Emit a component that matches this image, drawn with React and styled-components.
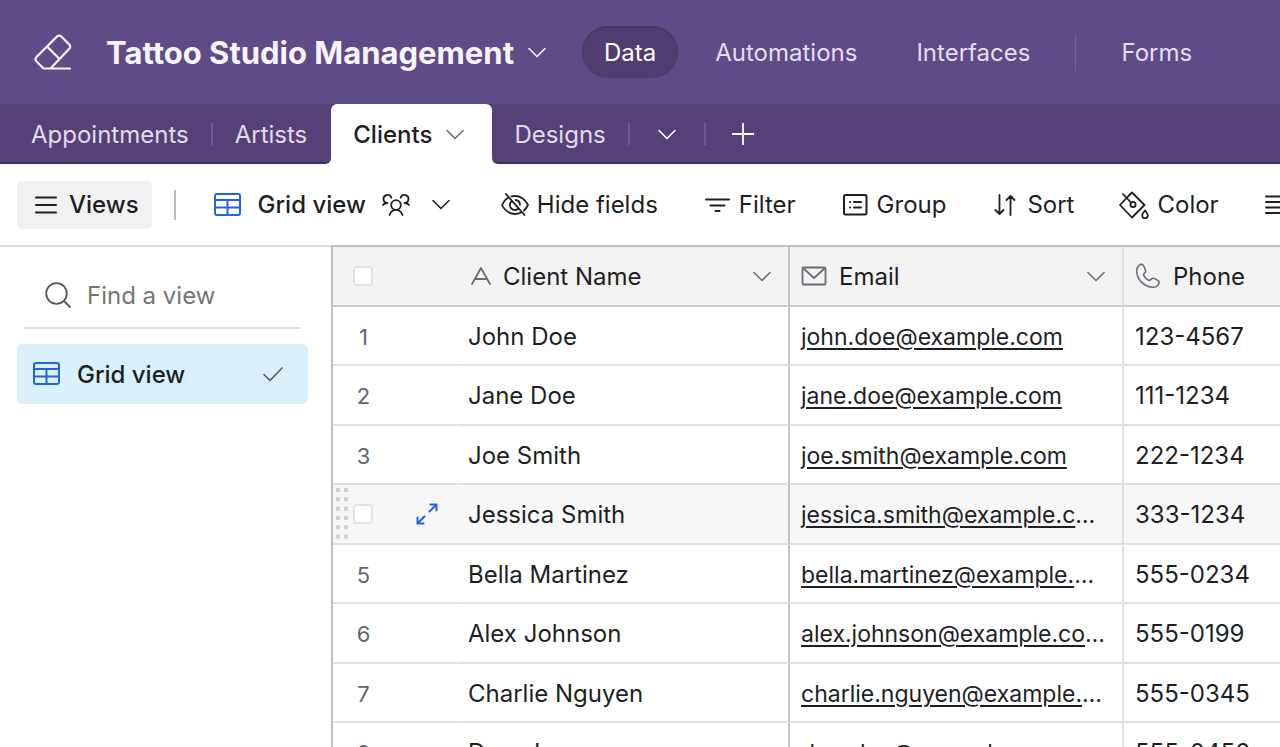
import { useState } from "react"
import styled, { createGlobalStyle } from "styled-components"

const CLIENTS = [
    { name: "John Doe", email: "john.doe@example.com", phone: "123-4567" },
    { name: "Jane Doe", email: "jane.doe@example.com", phone: "111-1234" },
    { name: "Joe Smith", email: "joe.smith@example.com", phone: "222-1234" },
    { name: "Jessica Smith", email: "jessica.smith@example.com", phone: "333-1234" },
    { name: "Bella Martinez", email: "bella.martinez@example.com", phone: "555-0234" },
    { name: "Alex Johnson", email: "alex.johnson@example.com", phone: "555-0199" },
    { name: "Charlie Nguyen", email: "charlie.nguyen@example.com", phone: "555-0345" },
    { name: "Drew Lee", email: "drew.lee@example.com", phone: "555-0456" },
]

const Icon = ({ w, h, stroke = 2, children }) => (
    <Svg width={w} height={h} viewBox={`0 0 ${w} ${h}`} strokeWidth={stroke} aria-hidden="true">
        {children}
    </Svg>
)

const Chevron = () => (
    <Icon w={18} h={11} stroke={1.6}><path d="M1 1.5l8 8 8-8" /></Icon>
)
const EraserIcon = () => (
    <Icon w={38} h={36} stroke={2.2}>
        <path d="M36 34.500H9.500L2.500 27.500a3 3 0 0 1 0-4.500L23 2.500a3 3 0 0 1 4.300 0l8 8a3 3 0 0 1 0 4.300L16.500 34.500M13.500 13L25 24.500" />
    </Icon>
)
const GridIcon = () => (
    <Icon w={28} h={24}>
        <rect x="1" y="1" width="25" height="21" rx="2" />
        <path d="M1 7h25M1 14.500h25M13.500 7v15" />
    </Icon>
)
const LinesIcon = () => (
    <Icon w={22} h={18}><path d="M1 1.500h20M1 9h20M1 16.500h20" /></Icon>
)
const PeopleIcon = () => (
    <Icon w={28} h={22} stroke={1.8}>
        <circle cx="14" cy="11" r="4.800" />
        <path d="M7.500 21c1-3 3.400-5.200 6.500-5.200s5.500 2.200 6.500 5.200M1 11c1.200-1.500 2.800-2 4.500-2M5.500 9a4 4 0 1 1 3.800-5.300M27 11c-1.200-1.500-2.800-2-4.500-2M22.500 9a4 4 0 1 0-3.800-5.300" />
    </Icon>
)
const EyeOffIcon = () => (
    <Icon w={28} h={24} stroke={1.8}>
        <path d="M5 1l18.500 21M10.500 3.400A12 12 0 0 1 14 3c9 0 13 9 13 9a17 17 0 0 1-4.200 5.600M7 4.800C2.900 7.200 1 12 1 12s4 9 13 9a12.500 12.500 0 0 0 6-1.500M17.300 15.700a5 5 0 0 1-6.800-7.400M14.500 7a5 5 0 0 1 4.500 4.600" />
    </Icon>
)
const FilterIcon = () => (
    <Icon w={28} h={16}><path d="M3 2.500h23M7.500 8.500h14M12.500 14h4" /></Icon>
)
const GroupIcon = () => (
    <Icon w={28} h={22}>
        <rect x="3" y="1" width="22.500" height="19.500" rx="1.500" />
        <path d="M9 8h.2M13 8h7M9 13.500h.2M13 13.500h7" />
    </Icon>
)
const SortIcon = () => (
    <Icon w={28} h={22} stroke={1.8}>
        <path d="M8.500 1v19M4.500 16l4 4 4-4M19.500 21V2M15.500 6l4-4 4 4" />
    </Icon>
)
const BucketIcon = () => (
    <Icon w={30} h={28} stroke={1.8}>
        <path d="M9 5.500L13 1.500 25.500 14 13 26.500 1 14 9 5.500M4 3l8 8.500" />
        <circle cx="14" cy="13.500" r="2.600" />
        <path d="M26 19.500s2.800 3.200 2.800 5a2.800 2.800 0 0 1-5.600 0c0-1.800 2.800-5 2.800-5z" />
    </Icon>
)
const RowHeightIcon = () => (
    <Icon w={28} h={20}><path d="M2 1.500h24M2 7h24M2 12.500h24M2 18h24" /></Icon>
)
const SearchIcon = () => (
    <Icon w={26} h={26} stroke={1.8}>
        <circle cx="11.500" cy="11.500" r="10.300" />
        <path d="M19 19l6 6" />
    </Icon>
)
const CheckIcon = () => (
    <Icon w={20} h={15} stroke={1.6}><path d="M1 7.500l6 6L19 1" /></Icon>
)
const TextIcon = () => (
    <Icon w={20} h={18} stroke={1.8}><path d="M1 17L10 1l9 16M4.500 12h11" /></Icon>
)
const MailIcon = () => (
    <Icon w={26} h={20} stroke={1.8}>
        <rect x="1.500" y="1.500" width="23" height="17" rx="1" />
        <path d="M2 2l11 10L24 2" />
    </Icon>
)
const PhoneIcon = () => (
    <Icon w={26} h={26} stroke={1.6}>
        <path d="M7.500 1.500C5 1 2 3 1.700 7c-.5 9 7.300 17 16.300 17.300 4 .2 6.500-3 6-5.800-.2-1-5.200-3.600-6.200-3.300l-3.300 2.300c-3-1-5-3-6-6l2.200-3C11 7.500 8.500 1.800 7.500 1.500z" />
    </Icon>
)
const ExpandIcon = () => (
    <Icon w={22} h={22}>
        <path d="M13.500 8.500L20.500 1.500M14.500 1.500h6V7.500M8.500 13.500l-7 7M1.500 14.500v6H7.500" />
    </Icon>
)
const PlusIcon = () => (
    <Icon w={22} h={22} stroke={1.8}><path d="M11 0v22M0 11h22" /></Icon>
)
const DragDots = () => (
    <Svg width="12" height="52" viewBox="0 0 12 52" aria-hidden="true">
        {[0, 1, 2, 3, 4, 5].map((i) => (
            <g key={i} fill="#d0d0d0" stroke="none">
                <rect x="0" y={i * 9.3} width="4" height="4" />
                <rect x="8" y={i * 9.3} width="4" height="4" />
            </g>
        ))}
    </Svg>
)

const App = () => {
    const [search, setSearch] = useState("")
    const [hovered, setHovered] = useState(3)

    return (
        <Page>
            <GlobalStyle />
            <Header>
                <BaseButton>
                    <EraserIcon />
                    <Title>Tattoo Studio Management</Title>
                    <Chevron />
                </BaseButton>
                <Nav>
                    <NavButton $active>Data</NavButton>
                    <NavButton>Automations</NavButton>
                    <NavButton>Interfaces</NavButton>
                    <NavDivider />
                    <NavButton>Forms</NavButton>
                </Nav>
            </Header>

            <TabStrip>
                <TabGroup $side="left">
                    <Tab>Appointments</Tab>
                    <TabDivider />
                    <Tab>Artists</Tab>
                </TabGroup>
                <ActiveCell>
                    <ActiveTab>Clients <Chevron /></ActiveTab>
                </ActiveCell>
                <TabGroup $side="right">
                    <Tab>Designs</Tab>
                    <TabDivider />
                    <IconTab aria-label="All tables"><Chevron /></IconTab>
                    <TabDivider />
                    <IconTab aria-label="Add table"><PlusIcon /></IconTab>
                </TabGroup>
            </TabStrip>

            <Toolbar>
                <ViewsButton><LinesIcon />Views</ViewsButton>
                <ToolDivider />
                <ViewButton>
                    <Blue><GridIcon /></Blue>
                    <strong>Grid view</strong>
                    <PeopleIcon />
                    <Chevron />
                </ViewButton>
                <Tools>
                    <ToolButton><EyeOffIcon />Hide fields</ToolButton>
                    <ToolButton><FilterIcon />Filter</ToolButton>
                    <ToolButton><GroupIcon />Group</ToolButton>
                    <ToolButton><SortIcon />Sort</ToolButton>
                    <ToolButton><BucketIcon />Color</ToolButton>
                    <ToolButton aria-label="Row height"><RowHeightIcon /></ToolButton>
                </Tools>
            </Toolbar>

            <Body>
                <Sidebar>
                    <SearchBox>
                        <SearchIcon />
                        <input
                            aria-label="Find a view"
                            placeholder="Find a view"
                            value={search}
                            onChange={(e) => setSearch(e.target.value)}
                        />
                    </SearchBox>
                    <ViewItem>
                        <Blue><GridIcon /></Blue>
                        <span>Grid view</span>
                        <CheckIcon />
                    </ViewItem>
                </Sidebar>
                <GridPane>
                    <Table>
                        <colgroup>
                            <col width="124" />
                            <col width="333" />
                            <col width="334" />
                            <col />
                        </colgroup>
                        <thead>
                            <tr>
                                <HeadCell><Gutter><Checkbox aria-label="Select all" /></Gutter></HeadCell>
                                <HeadCell $primary>
                                    <Field><TextIcon /><span>Client Name</span><Chevron /></Field>
                                </HeadCell>
                                <HeadCell $line>
                                    <Field><MailIcon /><span>Email</span><Chevron /></Field>
                                </HeadCell>
                                <HeadCell>
                                    <Field><PhoneIcon /><span>Phone</span></Field>
                                </HeadCell>
                            </tr>
                        </thead>
                        <tbody>
                            {CLIENTS.map((c, i) => (
                                <Row key={c.email} $hover={i === hovered} onMouseEnter={() => setHovered(i)}>
                                    <Cell>
                                        {i === hovered ? (
                                            <Gutter $hover>
                                                <DragDots />
                                                <Checkbox aria-label={`Select ${c.name}`} />
                                                <ExpandButton aria-label="Expand record"><ExpandIcon /></ExpandButton>
                                            </Gutter>
                                        ) : (
                                            <Gutter><RowNumber>{i + 1}</RowNumber></Gutter>
                                        )}
                                    </Cell>
                                    <Cell $primary>{c.name}</Cell>
                                    <Cell $line><a href={`mailto:${c.email}`}>{c.email}</a></Cell>
                                    <Cell>{c.phone}</Cell>
                                </Row>
                            ))}
                        </tbody>
                    </Table>
                </GridPane>
            </Body>
        </Page>
    )
}

const GlobalStyle = createGlobalStyle`
* { box-sizing: border-box; }
body {
    margin: 0;
    overflow: hidden;
    background: #fff;
    color: #1d1f25;
    font-family: Inter, "Liberation Sans", sans-serif;
    font-size: 24px;
}
button, input {
    border: 0;
    padding: 0;
    background: none;
    color: inherit;
    font: inherit;
}
button {
    display: flex;
    align-items: center;
    flex: none;
    white-space: nowrap;
    cursor: pointer;
}
`
const Svg = styled.svg`
    display: block;
    flex: none;
    fill: none;
    stroke: currentColor;
    stroke-linecap: round;
    stroke-linejoin: round;
`
const Page = styled.div`
    display: flex;
    flex-direction: column;
    height: 100vh;
`
const Header = styled.header`
    display: flex;
    align-items: center;
    flex: none;
    height: 104px;
    padding-left: 34px;
    background: #5f4b88;
    color: #f7f5fa;
`
const BaseButton = styled.button``
const Title = styled.span`
    margin: 0 14px 0 34px;
    font-size: 31px;
    font-weight: 700;
`
const Nav = styled.nav`
    display: flex;
    align-items: center;
    gap: 15px;
    margin-left: 36px;
`
const NavButton = styled.button`
    height: 52px;
    padding: 0 22px;
    border-radius: 26px;
    color: ${(p) => (p.$active ? "#fff" : "#e4dfec")};
    background: ${(p) => (p.$active ? "#503d70" : "none")};
    box-shadow: ${(p) => (p.$active ? "inset 0 1px 2px #46345f" : "none")};
`
const NavDivider = styled.span`
    width: 1px;
    height: 37px;
    margin: 0 8px;
    background: #75639a;
`
const TabStrip = styled.div`
    display: flex;
    flex: none;
    height: 60px;
    color: #e1dce9;
`
const TabGroup = styled.div`
    display: flex;
    align-items: center;
    flex: ${(p) => (p.$side === "right" ? "1" : "none")};
    padding: ${(p) => (p.$side === "left" ? "2px 2px 0 9px" : "2px 0 0")};
    border-bottom: 2px solid #412c66;
    border-radius: ${(p) => (p.$side === "left" ? "0 0 6px 0" : "0 0 0 6px")};
    background: #554178;
`
const Tab = styled.button`
    height: 100%;
    padding: 0 22px;
`
const TabDivider = styled.span`
    width: 2px;
    height: 22px;
    background: #6c5b8c;
`
const IconTab = styled.button`
    justify-content: center;
    width: 74px;
    height: 100%;
    color: #fff;
`
const ActiveCell = styled.div`
    display: flex;
    background: linear-gradient(#4a366d 30px, #fff 30px);
`
const ActiveTab = styled.button`
    gap: 14px;
    padding: 0 28px 0 22px;
    border-radius: 6px 6px 0 0;
    background: #fff;
    color: #1d1f25;
    font-weight: 500;
    svg { color: #6b6d76; }
`
const Toolbar = styled.div`
    display: flex;
    align-items: center;
    flex: none;
    height: 83px;
    padding-left: 17px;
    border-bottom: 2px solid #dcdcde;
    overflow: hidden;
`
const ViewsButton = styled.button`
    gap: 12px;
    height: 48px;
    padding: 0 13px 0 18px;
    border-radius: 5px;
    background: #f1f1f1;
    font-weight: 500;
`
const ToolDivider = styled.span`
    flex: none;
    width: 2px;
    height: 30px;
    margin: 0 38px 0 22px;
    background: #bcbcc0;
`
const ViewButton = styled.button`
    gap: 16px;
    strong { font-weight: 500; }
    > svg:last-child { margin-left: 6px; }
`
const Blue = styled.span`
    color: #2264dc;
`
const Tools = styled.div`
    display: flex;
    gap: 45px;
    margin-left: 51px;
`
const ToolButton = styled.button`
    gap: 8px;
`
const Body = styled.div`
    display: flex;
    flex: 1;
    min-height: 0;
`
const Sidebar = styled.aside`
    flex: none;
    width: 331px;
    padding: 14px 23px 0 17px;
`
const SearchBox = styled.div`
    display: flex;
    align-items: center;
    gap: 16px;
    height: 68px;
    margin: 0 7px 15px;
    padding: 2px 0 0 21px;
    border-bottom: 2px solid #e2e2e4;
    color: #55575f;
    input {
        flex: 1;
        min-width: 0;
        outline: none;
    }
    input::placeholder { color: #757575; }
`
const ViewItem = styled.button`
    gap: 16px;
    width: 100%;
    height: 60px;
    padding: 0 25px 0 16px;
    border-radius: 5px;
    background: #d9f0fd;
    font-weight: 500;
    text-align: left;
    span:nth-child(2) { flex: 1; }
    > svg { color: #55575f; }
`
const GridPane = styled.main`
    flex: 1;
    min-width: 0;
    overflow: hidden;
    margin-top: -2px;
    border-top: 2px solid #bfc0c4;
    border-left: 2px solid #bfc0c4;
`
const Table = styled.table`
    width: 100%;
    table-layout: fixed;
    border-collapse: separate;
    border-spacing: 0;
`
const HeadCell = styled.th`
    height: 60px;
    padding: 0 11px;
    border-bottom: 2px solid #c9c9cc;
    border-right: ${(p) => (p.$primary ? "2px solid #c4c4c8" : p.$line ? "2px solid #dde1e3" : "0")};
    padding-left: ${(p) => (p.$primary ? "14px" : "11px")};
    background: #f3f3f3;
    font-weight: 400;
    text-align: left;
    &:first-child { padding: 0; }
`
const Field = styled.div`
    display: flex;
    align-items: center;
    gap: 12px;
    padding-right: 6px;
    color: #6b6d76;
    span { flex: 1; color: #1d1f25; }
`
/* rows alternate so that they average 59.5px */
const Row = styled.tr`
    height: 59px;
    background: ${(p) => (p.$hover ? "#f7f7f7" : "#fff")};
    &:nth-child(even) { height: 60px; }
`
const Cell = styled.td`
    padding: ${(p) => (p.$line ? "2px 17px 0 11px" : "1px 11px 0")};
    border-bottom: 2px solid #dde1e3;
    border-right: ${(p) => (p.$primary ? "2px solid #c4c4c8" : p.$line ? "2px solid #dde1e3" : "0")};
    font-size: ${(p) => (p.$line ? "23px" : "24px")};
    overflow: hidden;
    text-overflow: ellipsis;
    white-space: nowrap;
    &:first-child {
        padding: 0;
        border-right: 1px solid transparent;
    }
    a {
        color: inherit;
        text-underline-offset: 3px;
        text-decoration-thickness: 2px;
    }
`
const Gutter = styled.div`
    display: flex;
    align-items: center;
    padding-left: ${(p) => (p.$hover ? "3px" : "20px")};
    > svg { margin-right: 5px; }
`
const Checkbox = styled.input.attrs({ type: "checkbox" })`
    appearance: none;
    flex: none;
    width: 20px;
    height: 20px;
    margin: 0;
    border: 2px solid #e3e3e3;
    border-radius: 4px;
    background: #fff;
`
const RowNumber = styled.span`
    width: 21px;
    padding-top: 2px;
    color: #616670;
    font-size: 22px;
    text-align: center;
`
const ExpandButton = styled.button`
    margin-left: 43px;
    color: #2264dc;
`

export default App
